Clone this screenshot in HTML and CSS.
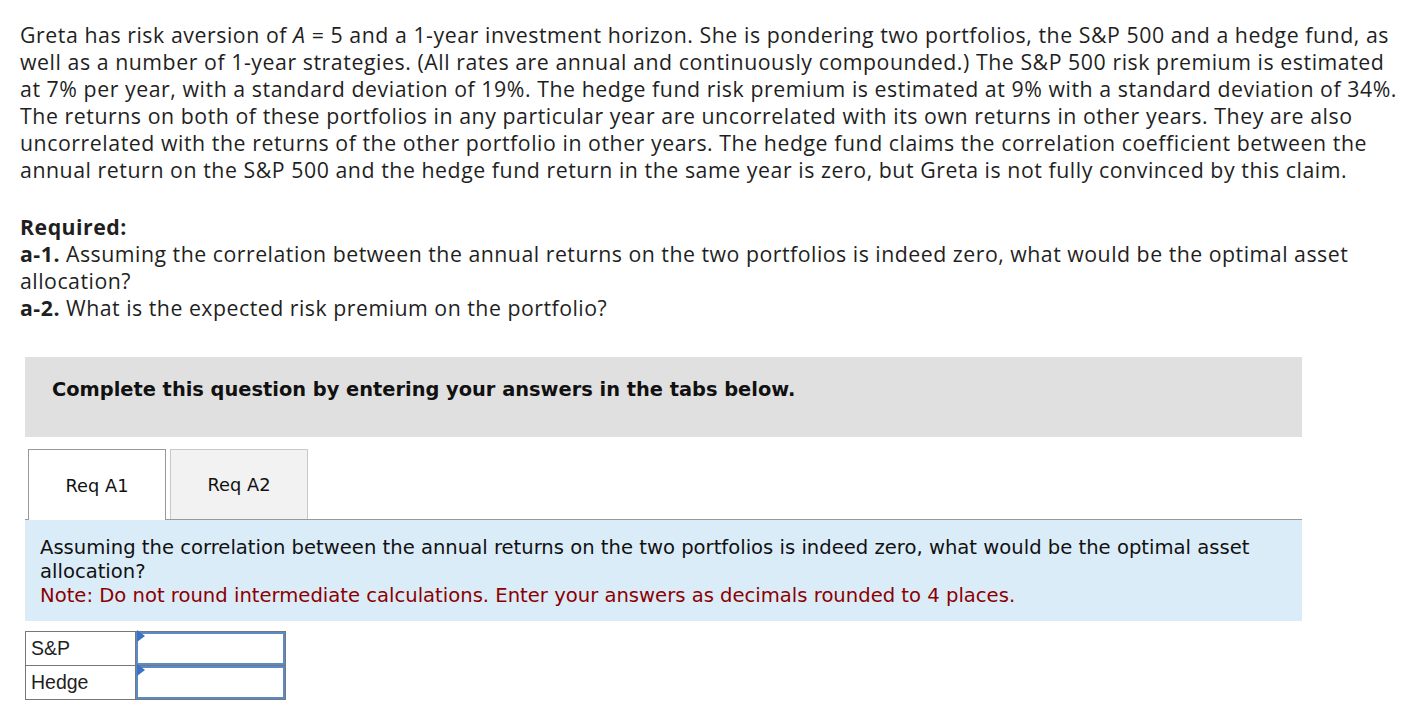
FILE: index.html
```html
<!DOCTYPE html>
<html>
<head>
<meta charset="utf-8">
<link rel="stylesheet" href="styles.css">
</head>
<body>
<div class="page">
  <p class="intro">Greta has risk aversion of <i>A</i> = 5 and a 1-year investment horizon. She is pondering two portfolios, the S&amp;P 500 and a hedge fund, as<br>
  well as a number of 1-year strategies. (All rates are annual and continuously compounded.) The S&amp;P 500 risk premium is estimated<br>
  at 7% per year, with a standard deviation of 19%. The hedge fund risk premium is estimated at 9% with a standard deviation of 34%.<br>
  The returns on both of these portfolios in any particular year are uncorrelated with its own returns in other years. They are also<br>
  uncorrelated with the returns of the other portfolio in other years. The hedge fund claims the correlation coefficient between the<br>
  annual return on the S&amp;P 500 and the hedge fund return in the same year is zero, but Greta is not fully convinced by this claim.</p>

  <div class="required">
    <div><b>Required:</b></div>
    <div><b>a-1.</b> Assuming the correlation between the annual returns on the two portfolios is indeed zero, what would be the optimal asset<br>allocation?</div>
    <div><b>a-2.</b> What is the expected risk premium on the portfolio?</div>
  </div>

  <div class="banner">Complete this question by entering your answers in the tabs below.</div>

  <div class="tabs">
    <div class="tab active">Req A1</div>
    <div class="tab">Req A2</div>
  </div>

  <div class="panel">
    <div>Assuming the correlation between the annual returns on the two portfolios is indeed zero, what would be the optimal asset<br>allocation?</div>
    <div class="note">Note: Do not round intermediate calculations. Enter your answers as decimals rounded to 4 places.</div>
  </div>

  <table class="answers">
    <tr><td class="label">S&amp;P</td><td class="cell"><div class="input"><span class="tri"></span></div></td></tr>
    <tr><td class="label">Hedge</td><td class="cell"><div class="input"><span class="tri"></span></div></td></tr>
  </table>
</div>
</body>
</html>
```

FILE: styles.css
```css
html, body {
  margin: 0;
  padding: 0;
  background: #fff;
}
.page {
  padding: 21px 0 0 20px;
  color: #1f1f1f;
}
.intro {
  margin: 0;
  font-family: "Open Sans", "Lato", sans-serif;
  font-size: 21.3px;
  letter-spacing: 0.55px;
  line-height: 27px;
  white-space: nowrap;
}
.intro i {
  font-style: italic;
}
.required {
  margin-top: 30px;
  font-family: "Open Sans", "Lato", sans-serif;
  font-size: 21.3px;
  letter-spacing: 0.5px;
  line-height: 27px;
  white-space: nowrap;
}
.required b {
  font-weight: 700;
}
.banner {
  margin: 36px 0 0 5px;
  width: 1277px;
  height: 80px;
  box-sizing: border-box;
  background: #e0e0e0;
  padding: 21px 0 0 27px;
  font-family: "DejaVu Sans", Verdana, sans-serif;
  font-weight: bold;
  font-size: 19.4px;
  line-height: 24px;
  color: #111;
}
.tabs {
  display: flex;
  gap: 4px;
  margin: 12px 0 0 8px;
  position: relative;
  z-index: 1;
}
.tab {
  width: 138px;
  box-sizing: border-box;
  display: flex;
  align-items: center;
  justify-content: center;
  font-family: "DejaVu Sans", Verdana, sans-serif;
  font-size: 17.8px;
  color: #111;
  background: #f2f2f2;
  border: 1px solid #c8c8c8;
  border-bottom: none;
  height: 70px;
}
.tab.active {
  background: #fff;
  border-color: #999;
  height: 71px;
  margin-bottom: -1px;
}
.panel {
  margin-left: 5px;
  width: 1277px;
  box-sizing: border-box;
  background: #dbecf9;
  border-top: 1px solid #999;
  padding: 16px 0 13px 15px;
  font-family: "DejaVu Sans", Verdana, sans-serif;
  font-size: 19.6px;
  line-height: 24px;
  color: #111;
  white-space: nowrap;
}
.note {
  color: #8b0000;
}
.answers {
  margin: 10px 0 0 5px;
  border-collapse: collapse;
  font-family: "Liberation Sans", Arial, sans-serif;
  font-size: 19.5px;
  color: #1f1f1f;
}
.answers td {
  border: 1px solid #777;
  padding: 0;
  height: 33px;
}
.label {
  width: 104px;
  padding-left: 5px !important;
}
.cell {
  width: 149px;
}
.input {
  position: relative;
  height: 29px;
  border: 2px solid #5b8ac9;
  background: #fff;
}
.tri {
  position: absolute;
  left: -1px;
  top: -4px;
  width: 0;
  height: 0;
  border-top: 6px solid transparent;
  border-bottom: 6px solid transparent;
  border-left: 8px solid #3b72c4;
}
```
